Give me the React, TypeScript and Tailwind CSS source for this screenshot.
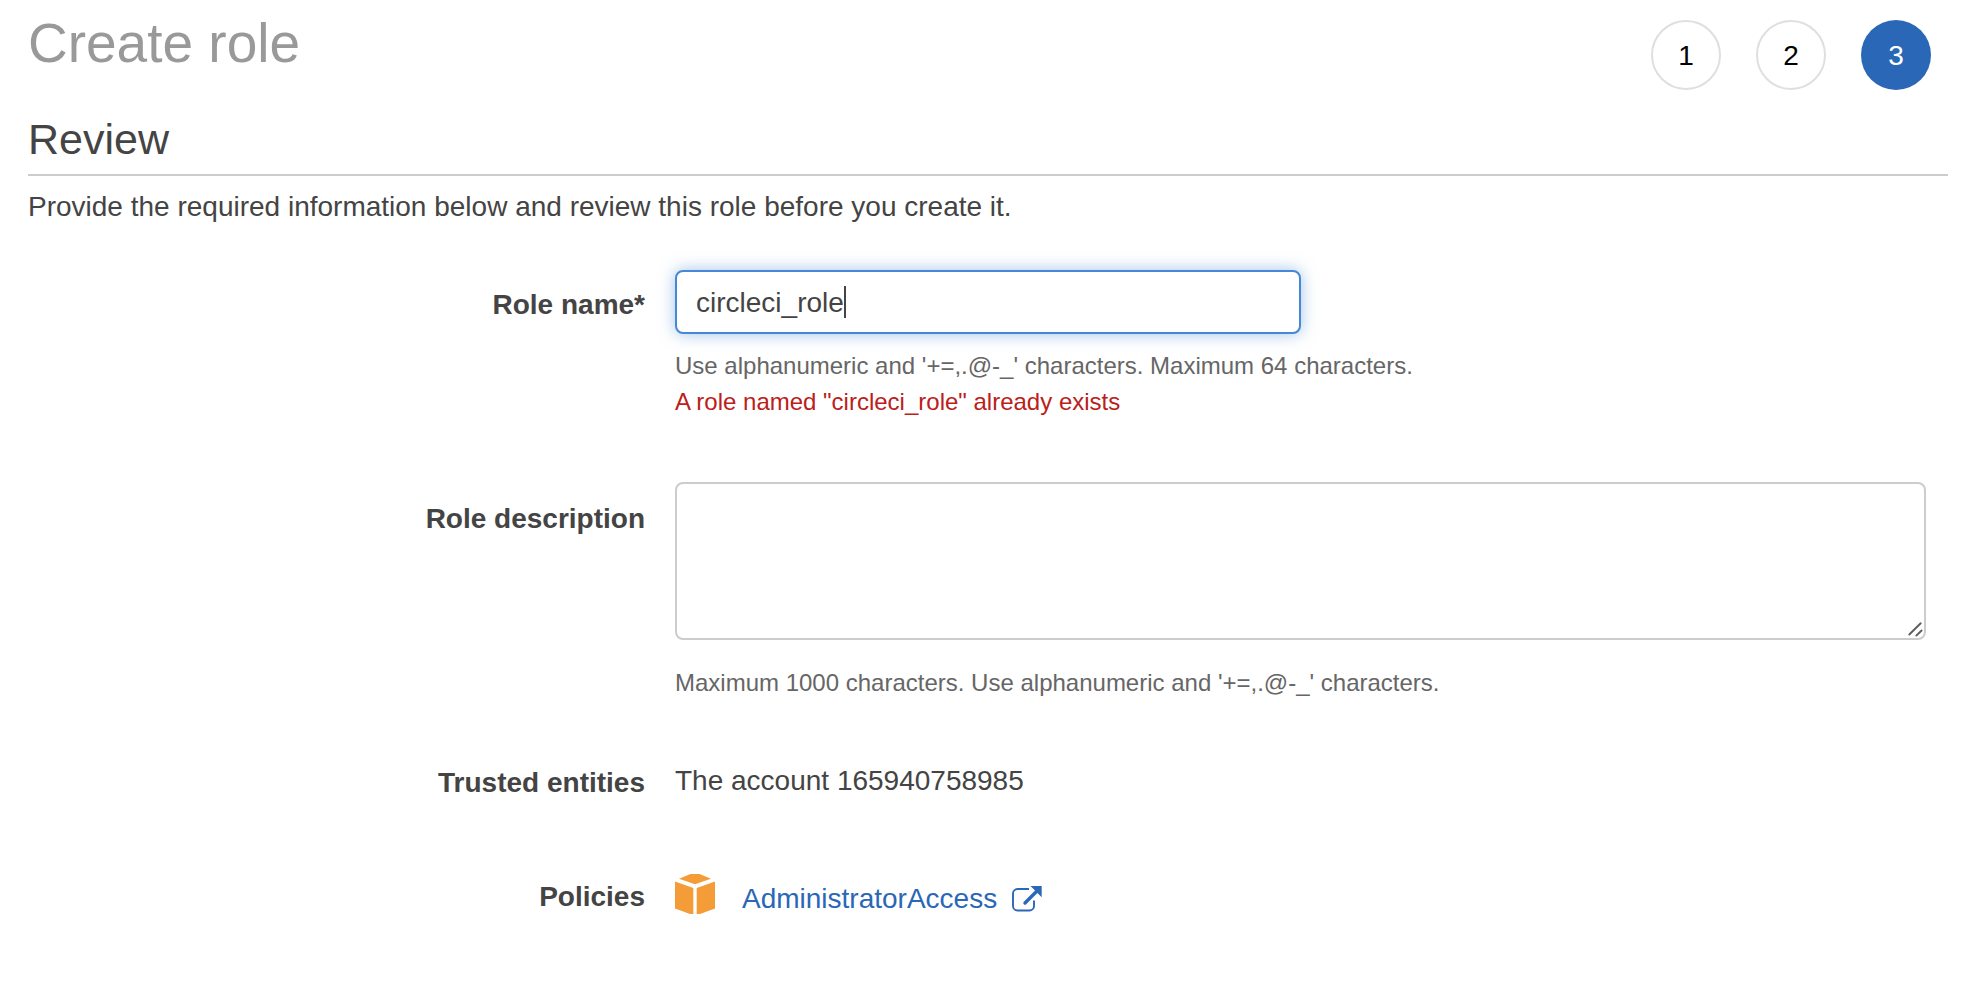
import { useState, type ReactNode } from 'react';

const steps = [1, 2, 3];
const currentStep = 3;

function Steps() {
  return (
    <nav aria-label="Steps" className="pr-[17px]">
      <ol className="flex gap-[35px]">
        {steps.map((step) => (
          <li key={step}>
            <button
              type="button"
              aria-current={step === currentStep ? 'step' : undefined}
              className={
                step === currentStep
                  ? 'flex size-[70px] items-center justify-center rounded-full bg-[#2a67b6] pt-[2px] text-[28px] leading-10 text-white'
                  : 'flex size-[70px] items-center justify-center rounded-full border-2 border-[#dfdfdf] bg-white pt-[2px] text-[28px] leading-10 text-black'
              }
            >
              {step}
            </button>
          </li>
        ))}
      </ol>
    </nav>
  );
}

const rowClass = 'grid grid-cols-[617fr_1251fr] gap-x-[30px] pr-[22px]';
const labelClass = 'text-right text-[28px] leading-[42px] font-bold';
const hintClass = 'text-[24px] leading-9 text-[#666]';

function Row({ className, children }: { className: string; children: ReactNode }) {
  return <div className={`${rowClass} ${className}`}>{children}</div>;
}

function CubeIcon() {
  return (
    <svg aria-hidden="true" viewBox="0 0 40 40" className="size-10 shrink-0" fill="#f39c38">
      <path d="M15.500 0h9L36 4.800 20 10.300 4 4.800z" />
      <path d="M0 7.500 18.300 14V40H15L0 34.500z" />
      <path d="M40 7.500 21.700 14V40H25L40 34.500z" />
    </svg>
  );
}

function ExternalIcon() {
  return (
    <svg aria-hidden="true" viewBox="0 0 30 26" className="h-[26px] w-[30px] shrink-0" fill="none">
      <path
        d="M17 3H5.500A4.500 4.500 0 0 0 1 7.500V20a4.500 4.500 0 0 0 4.500 4.500H17.500A4.500 4.500 0 0 0 22 20V14.500"
        stroke="#2a67b6"
        strokeWidth="1.900"
      />
      <path d="M13 17 25 5" stroke="#2a67b6" strokeWidth="3.400" strokeLinecap="round" />
      <path d="M18.500 0H29.700V11.200z" fill="#2a67b6" />
    </svg>
  );
}

export default function App() {
  const [name, setName] = useState('circleci_role');
  const [focused, setFocused] = useState(false);

  return (
    <main className="min-h-screen bg-white pr-[38px] pb-10 pl-7 font-['Liberation_Sans',Arial,sans-serif] text-[#444]">
      <header className="flex items-start justify-between pt-5">
        <h1 className="text-[55px] leading-[46px] text-[#999]">Create role</h1>
        <Steps />
      </header>

      <h2 className="mt-[25px] border-b-2 border-[#ccc] pb-[11px] text-[43px] leading-[48px]">Review</h2>
      <p className="mt-[10px] text-[28px] leading-[42px]">
        Provide the required information below and review this role before you create it.
      </p>

      <form>
        <Row className="mt-[42px]">
          <label htmlFor="role-name" className={`${labelClass} pt-[14px]`}>
            Role name*
          </label>
          <div>
            <div className="relative w-1/2">
              <input
                id="role-name"
                type="text"
                value={name}
                onChange={(e) => setName(e.target.value)}
                onFocus={() => setFocused(true)}
                onBlur={() => setFocused(false)}
                aria-describedby="role-name-hint role-name-error"
                className="block h-16 w-full rounded-lg border-2 border-[#4687d6] bg-white px-[19px] pt-[2px] text-[28px] text-[#444] shadow-[0_0_16px_rgba(70,135,214,0.5)] outline-none"
              />
              {!focused && <span aria-hidden="true" className="absolute top-4 left-[169px] h-8 w-[2px] bg-[#444]" />}
            </div>
            <p id="role-name-hint" className={`${hintClass} mt-[14px]`}>
              Use alphanumeric and '+=,.@-_' characters. Maximum 64 characters.
            </p>
            <p id="role-name-error" className="text-[24px] leading-9 text-[#bb201a]">
              A role named "circleci_role" already exists
            </p>
          </div>
        </Row>

        <Row className="mt-[62px]">
          <label htmlFor="role-description" className={`${labelClass} pt-4`}>
            Role description
          </label>
          <div>
            <div className="relative">
              <textarea
                id="role-description"
                aria-describedby="role-description-hint"
                className="block h-[158px] w-full resize-y rounded-lg border-2 border-[#ccc] bg-white px-[18px] py-3 text-[28px] leading-10 outline-none [&::-webkit-resizer]:hidden"
              />
              <svg
                aria-hidden="true"
                viewBox="0 0 16 16"
                className="pointer-events-none absolute right-[3px] bottom-[3px] size-4"
                stroke="#5c5c5c"
                strokeWidth="1.900"
                strokeLinecap="round"
              >
                <path d="M2.300 13.500 13.700 2.300M9.300 14.600 14.600 9.500" />
              </svg>
            </div>
            <p id="role-description-hint" className={`${hintClass} mt-[25px]`}>
              Maximum 1000 characters. Use alphanumeric and '+=,.@-_' characters.
            </p>
          </div>
        </Row>

        <Row className="mt-[59px]">
          <div className={`${labelClass} pt-[2px]`}>Trusted entities</div>
          <div className="text-[28px] leading-[42px]">The account 165940758985</div>
        </Row>

        <Row className="mt-[70px]">
          <div className={`${labelClass} pt-[2px]`}>Policies</div>
          <div className="flex items-start gap-[27px]">
            <CubeIcon />
            <a href="#administrator-access" className="flex items-center gap-[15px] pt-1 text-[28px] leading-[42px] text-[#2a67b6]">
              AdministratorAccess
              <ExternalIcon />
            </a>
          </div>
        </Row>
      </form>
    </main>
  );
}
